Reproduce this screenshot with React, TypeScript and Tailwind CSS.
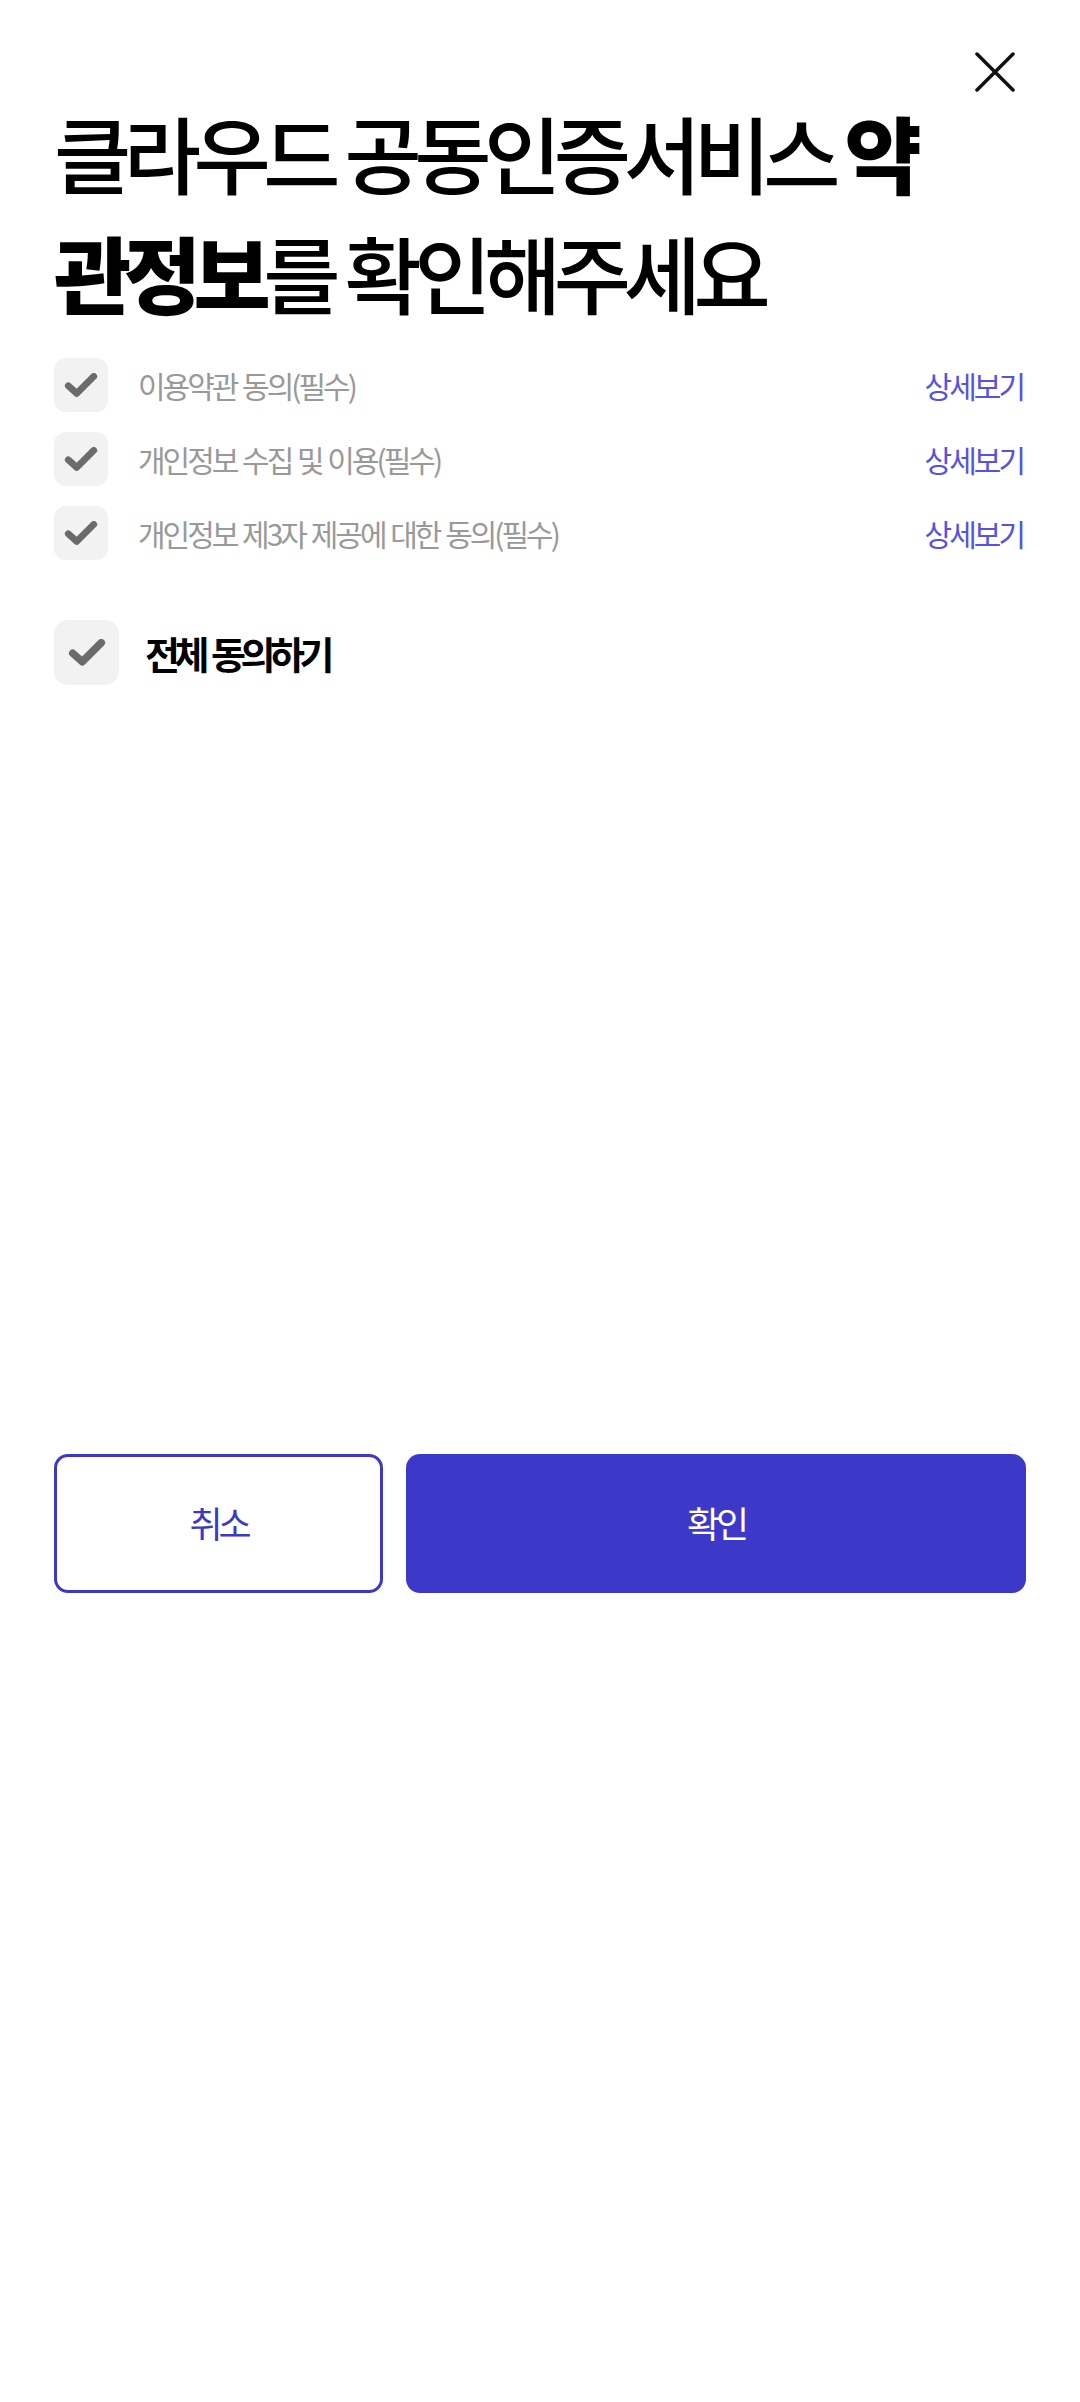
import { useState } from 'react';

const TERMS = [
  '이용약관 동의(필수)',
  '개인정보 수집 및 이용(필수)',
  '개인정보 제3자 제공에 대한 동의(필수)',
];

function CheckMark({ size }: { size: number }) {
  return (
    <svg width={size} height={size * 0.7} viewBox="0 0 40 28" fill="none">
      <path
        d="M5 15 L15 24 L35 4"
        stroke="#6b6b6b"
        strokeWidth="8"
        strokeLinecap="round"
        strokeLinejoin="round"
      />
    </svg>
  );
}

export default function App() {
  const [checked, setChecked] = useState([true, true, true]);
  const allChecked = checked.every(Boolean);

  const toggle = (i: number) =>
    setChecked((prev) => prev.map((v, idx) => (idx === i ? !v : v)));

  return (
    <div
      className="min-h-[2402px] w-[1080px] bg-white px-[54px]"
      style={{ fontFamily: '"Noto Sans CJK KR", "Noto Sans", sans-serif' }}
    >
      {/* Close */}
      <div className="flex justify-end pt-[52px] pr-[11px]">
        <button className="h-[40px] w-[40px]">
          <svg width="40" height="40" viewBox="0 0 40 40">
            <path d="M2 2 L38 38 M38 2 L2 38" stroke="#111" strokeWidth="3.5" strokeLinecap="round" />
          </svg>
        </button>
      </div>

      {/* Title */}
      <h1 className="w-[900px] break-all text-[84px] leading-[120px] font-medium tracking-[-7.5px] text-black">
        클라우드 공동인증서비스 <span className="font-black">약관정보</span>를 확인해주세요
      </h1>

      {/* Terms */}
      <div className="mt-[26px] flex flex-col gap-[20px]">
        {TERMS.map((t, i) => (
          <div key={t} className="flex items-center">
            <button
              onClick={() => toggle(i)}
              className="flex h-[54px] w-[54px] items-center justify-center rounded-[12px] bg-[#f2f2f2]"
            >
              {checked[i] && <CheckMark size={34} />}
            </button>
            <span className="ml-[30px] flex-1 text-[30px] tracking-[-3px] [word-spacing:2px] text-[#999999]">{t}</span>
            <button className="mr-[3px] text-[30px] tracking-[-3px] text-[#5752e0]">상세보기</button>
          </div>
        ))}
      </div>

      {/* Agree all */}
      <div className="mt-[60px] flex items-center">
        <button
          onClick={() => setChecked(TERMS.map(() => !allChecked))}
          className="flex h-[65px] w-[65px] items-center justify-center rounded-[14px] bg-[#f2f2f2]"
        >
          {allChecked && <CheckMark size={38} />}
        </button>
        <span className="ml-[26px] text-[38px] font-bold tracking-[-5.5px] [word-spacing:4px] text-black">전체 동의하기</span>
      </div>

      {/* Buttons */}
      <div className="mt-[769px] flex gap-[23px]">
        <button className="h-[139px] w-[329px] rounded-[14px] border-[3px] border-[#3d39c8] pb-[4px] text-[36px] tracking-[-4px] text-[#3d39c8]">
          취소
        </button>
        <button className="h-[139px] flex-1 rounded-[14px] bg-[#3d39c8] pb-[4px] text-[36px] tracking-[-4px] text-white">
          확인
        </button>
      </div>
    </div>
  );
}
